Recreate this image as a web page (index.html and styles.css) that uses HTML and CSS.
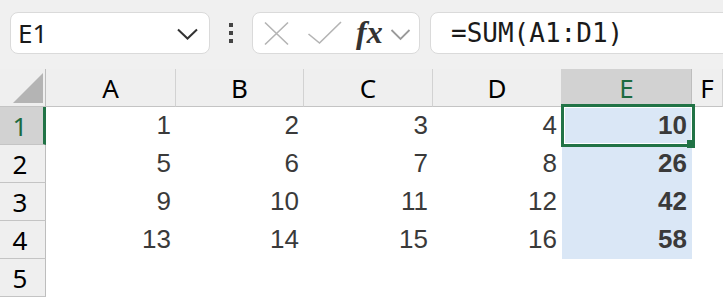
FILE: index.html
```html
<!DOCTYPE html>
<html>
<head>
<meta charset="utf-8">
<link rel="stylesheet" href="styles.css">
</head>
<body>
<div class="toolbar">
  <div class="namebox">
    <span class="nb-text">E1</span>
    <svg class="nb-chev" width="22" height="12" viewBox="0 0 22 12"><path d="M1 1.5 L10.5 10.5 L20 1.5" fill="none" stroke="#333" stroke-width="2"/></svg>
  </div>
  <div class="dots"><i></i><i></i><i></i></div>
  <div class="fbtns">
    <svg class="ic-x" width="27" height="25" viewBox="0 0 27 25"><path d="M2 1.5 L25 23.5 M25 1.5 L2 23.5" stroke="#b4b4b4" stroke-width="1.6" fill="none"/></svg>
    <svg class="ic-check" width="36" height="25" viewBox="0 0 36 25"><path d="M1.5 13 L12.5 22 L34 1" stroke="#b4b4b4" stroke-width="1.6" fill="none"/></svg>
    <span class="fx">fx</span>
    <svg class="ic-chev" width="22" height="13" viewBox="0 0 22 13"><path d="M1.5 2 L10.5 11 L19.5 2" fill="none" stroke="#9a9a9a" stroke-width="1.8"/></svg>
  </div>
  <div class="formula">=SUM(A1:D1)</div>
</div>
<div class="sheet">
  <div class="corner"><span class="tri"></span></div>
  <div class="ch">A</div>
  <div class="ch">B</div>
  <div class="ch">C</div>
  <div class="ch">D</div>
  <div class="ch sel">E</div>
  <div class="ch">F</div>

  <div class="rh sel">1</div>
  <div class="c">1</div><div class="c">2</div><div class="c">3</div><div class="c">4</div><div class="c e">10</div><div class="c"></div>

  <div class="rh">2</div>
  <div class="c">5</div><div class="c">6</div><div class="c">7</div><div class="c">8</div><div class="c e">26</div><div class="c"></div>

  <div class="rh">3</div>
  <div class="c">9</div><div class="c">10</div><div class="c">11</div><div class="c">12</div><div class="c e">42</div><div class="c"></div>

  <div class="rh">4</div>
  <div class="c">13</div><div class="c">14</div><div class="c">15</div><div class="c">16</div><div class="c e">58</div><div class="c"></div>

  <div class="rh">5</div>
  <div class="c"></div><div class="c"></div><div class="c"></div><div class="c"></div><div class="c"></div><div class="c"></div>

  <div class="active"></div>
  <div class="handle"></div>
</div>
</body>
</html>
```
FILE: styles.css
```css
* { box-sizing: border-box; }
html, body { margin: 0; padding: 0; }
body {
  width: 723px;
  height: 297px;
  overflow: hidden;
  background: #ffffff;
  font-family: "Noto Sans", "Liberation Sans", sans-serif;
}
.toolbar {
  height: 69px;
  background: #f0f0f0;
  display: flex;
  align-items: flex-start;
  padding: 12px 0 0 10px;
  overflow: hidden;
}
.namebox {
  width: 200px;
  height: 42px;
  flex: none;
  background: #fff;
  border: 1px solid #dadada;
  border-radius: 8px;
  display: flex;
  align-items: center;
  padding-left: 7px;
}
.nb-text {
  font-size: 26px;
  color: #1a1a1a;
  line-height: 1;
  flex: 1;
}
.nb-chev { margin-right: 10px; margin-top: 2px; }
.dots {
  margin-left: 19px;
  width: 4px;
  height: 42px;
  flex: none;
  display: flex;
  flex-direction: column;
  justify-content: center;
  gap: 4px;
}
.dots i {
  display: block;
  width: 4px;
  height: 4px;
  background: #444;
}
.fbtns {
  margin-left: 19px;
  width: 168px;
  height: 42px;
  flex: none;
  background: #fff;
  border: 1px solid #dadada;
  border-radius: 8px;
  display: flex;
  align-items: center;
  padding-left: 10px;
}
.ic-check { margin-left: 17px; }
.fx {
  margin-left: 13px;
  font-family: "Liberation Serif", "DejaVu Serif", serif;
  font-style: italic;
  font-weight: bold;
  font-size: 32px;
  color: #333;
  line-height: 1;
  margin-top: -2px;
}
.ic-chev { margin-left: 7px; margin-top: 2px; }
.formula {
  margin-left: 10px;
  flex: none;
  width: 310px;
  height: 42px;
  background: #fff;
  border: 1px solid #dadada;
  border-radius: 8px;
  font-family: "DejaVu Sans Mono", "Liberation Mono", monospace;
  font-size: 26px;
  color: #1a1a1a;
  line-height: 40px;
  padding-left: 20px;
}
.sheet {
  position: relative;
  display: grid;
  grid-template-columns: 46px 130px 128px 129px 129px 130px 1fr;
  grid-auto-rows: 38px;
  background: #fff;
}
.corner {
  background: #efefef;
  border-right: 1px solid #bdbdbd;
  border-bottom: 1px solid #c4c4c4;
  position: relative;
}
.tri {
  position: absolute;
  left: 13px;
  top: 4px;
  width: 0;
  height: 0;
  border-style: solid;
  border-width: 0 0 30px 30px;
  border-color: transparent transparent #b4b4b4 transparent;
}
.ch {
  background: #efefef;
  border-right: 1px solid #d2d2d2;
  border-bottom: 1px solid #c4c4c4;
  text-align: center;
  font-size: 26px;
  line-height: 38px;
  color: #000;
}
.ch.sel {
  background: #d2d2d2;
  color: #1d6b40;
  border-right-color: #bdbdbd;
}
.rh {
  background: #efefef;
  border-right: 1px solid #bdbdbd;
  border-bottom: 1px solid #c4c4c4;
  text-align: center;
  padding-right: 5px;
  font-size: 26px;
  line-height: 38px;
  color: #000;
}
.rh.sel {
  background: #d2d2d2;
  color: #1d6b40;
  border-right: 3px solid #217346;
  padding-right: 3px;
}
.c {
  font-family: "Liberation Sans", "Noto Sans", sans-serif;
  font-size: 26px;
  line-height: 37px;
  text-align: right;
  padding-right: 5px;
  color: #3a3a3a;
}
.c.e {
  background: #dae7f6;
  font-weight: bold;
}
.active {
  position: absolute;
  left: 561px;
  top: 35px;
  width: 134px;
  height: 43px;
  border: 3px solid #217346;
  box-shadow: inset 0 0 0 1px #ffffff;
}
.handle {
  position: absolute;
  left: 687px;
  top: 71px;
  width: 8px;
  height: 8px;
  background: #217346;
}
```
